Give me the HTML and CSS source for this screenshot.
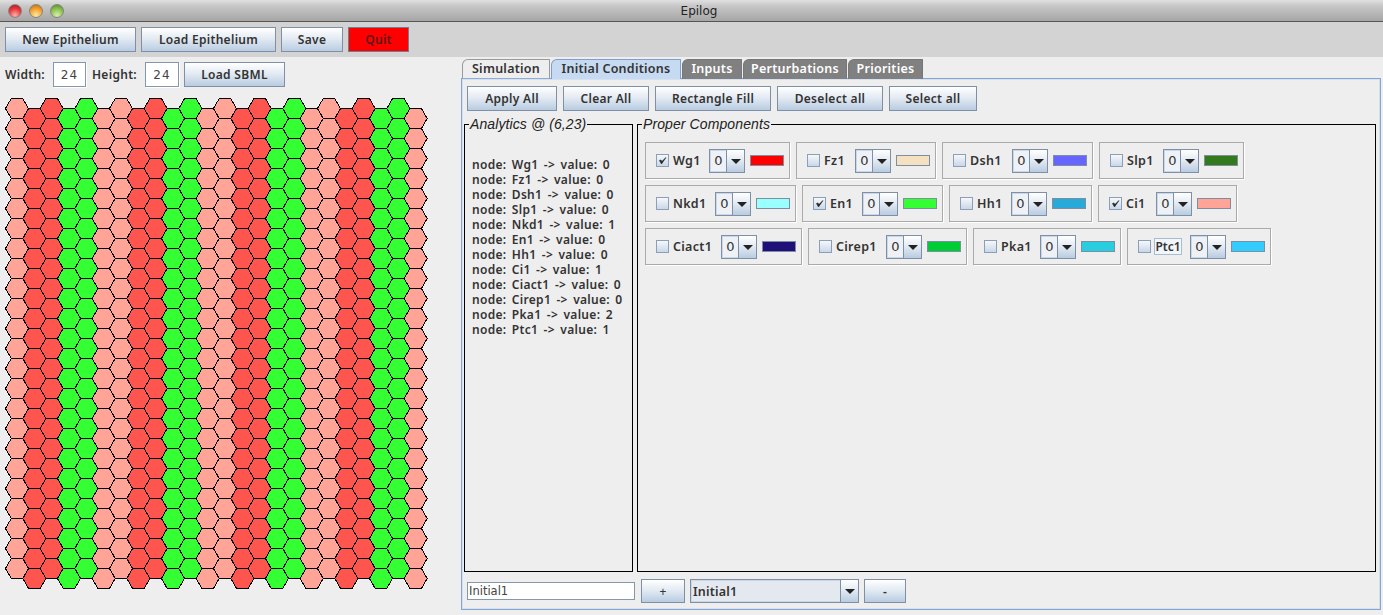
FILE: index.html
```html
<!DOCTYPE html>
<html lang="en">
<head>
<meta charset="utf-8">
<title>Epilog</title>
<link rel="stylesheet" href="styles.css">
</head>
<body>
<div class="window">
  <header class="titlebar">
    <div class="lights"><span class="light red"></span><span class="light amber"></span><span class="light green"></span></div>
    <div class="title">Epilog</div>
  </header>
  <nav class="toolbar">
    <button class="btn w-new">New Epithelium</button>
    <button class="btn w-load">Load Epithelium</button>
    <button class="btn w-save">Save</button>
    <button class="btn w-quit quit">Quit</button>
  </nav>
  <main class="main">
    <section class="left">
      <div class="dims">
        <label class="dim-label lw">Width:</label>
        <span class="dim-input iw">24</span>
        <label class="dim-label lh">Height:</label>
        <span class="dim-input ih">24</span>
        <button class="btn w-sbml">Load SBML</button>
      </div>
      <svg id="grid" class="grid" width="430" height="492" shape-rendering="crispEdges"></svg>
    </section>
    <section class="right">
      <div class="tabs">
        <div class="tab t-sim plain">Simulation</div>
        <div class="tab t-init active">Initial Conditions</div>
        <div class="tab t-inp">Inputs</div>
        <div class="tab t-per">Perturbations</div>
        <div class="tab t-pri">Priorities</div>
      </div>
      <div class="content">
        <div class="actions">
          <button class="btn w-apply">Apply All</button>
          <button class="btn w-clear">Clear All</button>
          <button class="btn w-rect">Rectangle Fill</button>
          <button class="btn w-desel">Deselect all</button>
          <button class="btn w-sel">Select all</button>
        </div>
        <div class="panels">
          <fieldset class="group analytics">
            <legend>Analytics @ (6,23)</legend>
            <div class="node">node: Wg1 -&gt; value: 0</div>
            <div class="node">node: Fz1 -&gt; value: 0</div>
            <div class="node">node: Dsh1 -&gt; value: 0</div>
            <div class="node">node: Slp1 -&gt; value: 0</div>
            <div class="node">node: Nkd1 -&gt; value: 1</div>
            <div class="node">node: En1 -&gt; value: 0</div>
            <div class="node">node: Hh1 -&gt; value: 0</div>
            <div class="node">node: Ci1 -&gt; value: 1</div>
            <div class="node">node: Ciact1 -&gt; value: 0</div>
            <div class="node">node: Cirep1 -&gt; value: 0</div>
            <div class="node">node: Pka1 -&gt; value: 2</div>
            <div class="node">node: Ptc1 -&gt; value: 1</div>
          </fieldset>
          <fieldset class="group proper">
            <legend>Proper Components</legend>
            <div class="comp-row">
              <div class="comp"><span class="check"><svg width="13" height="13" viewBox="0 0 13 13"><path class="tick" d="M3.5 6.5 L5.5 10 L10 3.5 L5.8 7.6 L5 6 Z"/></svg></span><span class="name l36">Wg1</span><span class="combo"><span class="val">0</span><span class="arrow"></span></span><span class="swatch c-wg"></span></div>
              <div class="comp"><span class="check"></span><span class="name l31">Fz1</span><span class="combo"><span class="val">0</span><span class="arrow"></span></span><span class="swatch c-fz"></span></div>
              <div class="comp"><span class="check"></span><span class="name l42">Dsh1</span><span class="combo"><span class="val">0</span><span class="arrow"></span></span><span class="swatch c-dsh"></span></div>
              <div class="comp"><span class="check"></span><span class="name l36">Slp1</span><span class="combo"><span class="val">0</span><span class="arrow"></span></span><span class="swatch c-slp"></span></div>
            </div>
            <div class="comp-row">
              <div class="comp"><span class="check"></span><span class="name l42">Nkd1</span><span class="combo"><span class="val">0</span><span class="arrow"></span></span><span class="swatch c-nkd"></span></div>
              <div class="comp"><span class="check"><svg width="13" height="13" viewBox="0 0 13 13"><path class="tick" d="M3.5 6.5 L5.5 10 L10 3.5 L5.8 7.6 L5 6 Z"/></svg></span><span class="name l32">En1</span><span class="combo"><span class="val">0</span><span class="arrow"></span></span><span class="swatch c-en"></span></div>
              <div class="comp"><span class="check"></span><span class="name l34">Hh1</span><span class="combo"><span class="val">0</span><span class="arrow"></span></span><span class="swatch c-hh"></span></div>
              <div class="comp"><span class="check"><svg width="13" height="13" viewBox="0 0 13 13"><path class="tick" d="M3.5 6.5 L5.5 10 L10 3.5 L5.8 7.6 L5 6 Z"/></svg></span><span class="name l30">Ci1</span><span class="combo"><span class="val">0</span><span class="arrow"></span></span><span class="swatch c-ci"></span></div>
            </div>
            <div class="comp-row">
              <div class="comp"><span class="check"></span><span class="name l48">Ciact1</span><span class="combo"><span class="val">0</span><span class="arrow"></span></span><span class="swatch c-ciact"></span></div>
              <div class="comp"><span class="check"></span><span class="name l50">Cirep1</span><span class="combo"><span class="val">0</span><span class="arrow"></span></span><span class="swatch c-cirep"></span></div>
              <div class="comp"><span class="check"></span><span class="name l39">Pka1</span><span class="combo"><span class="val">0</span><span class="arrow"></span></span><span class="swatch c-pka"></span></div>
              <div class="comp"><span class="check"></span><span class="name l35"><span class="focused">Ptc1</span></span><span class="combo"><span class="val">0</span><span class="arrow"></span></span><span class="swatch c-ptc"></span></div>
            </div>
          </fieldset>
        </div>
        <div class="bottom">
          <span class="text-field">Initial1</span>
          <button class="btn w-plus">+</button>
          <span class="combo wide"><span class="val">Initial1</span><span class="arrow"></span></span>
          <button class="btn w-minus">-</button>
        </div>
      </div>
    </section>
  </main>
</div>
<script src="hexes.js"></script>
</body>
</html>
```
FILE: styles.css
```css
* { box-sizing: border-box; }
html, body { margin: 0; padding: 0; }
body { width: 1383px; height: 615px; overflow: hidden; background: #eeeeee; color: #333; font-family: "Noto Sans", "DejaVu Sans", sans-serif; font-size: 12px; font-weight: 600; letter-spacing: 0.3px; }
.window { display: flex; flex-direction: column; height: 615px; }

.titlebar { position: relative; height: 22px; flex: none; padding-left: 15px; background: linear-gradient(#e0e0e0, #c6c6c6 30%, #a6a6a6); border-bottom: 1px solid #555; display: flex; align-items: center; justify-content: center; }
.title { font-family: "DejaVu Sans", sans-serif; font-weight: 400; font-size: 12px; letter-spacing: 0; color: #222; }
.lights { position: absolute; left: 8px; top: 4px; display: flex; gap: 7px; }
.light { width: 14px; height: 14px; border-radius: 50%; border: 1px solid #858585; }
.light.red { background: radial-gradient(circle at 50% 85%, #ffb0a8, #e8363c 55%, #a0141c); }
.light.amber { background: radial-gradient(circle at 50% 85%, #ffe9a0, #f4a030 55%, #b46812); }
.light.green { background: radial-gradient(circle at 50% 85%, #d8f0a8, #8cc050 55%, #4a8626); }

.toolbar { height: 35px; flex: none; background: #d3d3d3; display: flex; gap: 5px; padding: 5px 0 0 5px; }

.btn { display: block; height: 25px; padding: 0; font: inherit; letter-spacing: inherit; color: #333; border: 1px solid #7f90a6; border-radius: 0; background: linear-gradient(#ffffff, #e4ebf3 45%, #b9cce1); flex: none; }
.quit { background: #ff0000; color: #5e1a1a; border-color: #6f7f93; }
.w-new { width: 131px; } .w-load { width: 135px; } .w-save { width: 62px; } .w-quit { width: 61px; } .w-sbml { width: 101px; }
.w-apply { width: 90px; } .w-clear { width: 86px; } .w-rect { width: 116px; } .w-desel { width: 106px; } .w-sel { width: 88px; }
.w-plus { width: 44px; height: 24px; font-weight: 400; } .w-minus { width: 42px; height: 24px; }

.main { flex: 1; min-height: 0; display: flex; }
.left { width: 461px; flex: none; padding: 5px 0 0 5px; }
.dims { display: flex; align-items: center; height: 25px; }
.lw { width: 48px; }
.lh { width: 53px; margin-left: 6px; }
.dim-input { height: 25px; background: #fff; border: 1px solid #8497ad; box-shadow: 1px 1px 0 #fff; display: flex; align-items: center; justify-content: center; font-family: "DejaVu Sans", sans-serif; font-weight: 400; font-size: 12px; letter-spacing: 1px; color: #444; }
.iw { width: 33px; }
.ih { width: 34px; margin-right: 5px; }
.grid { display: block; margin: 11px 0 0 -5px; }

.right { flex: 1; min-width: 0; padding-top: 2px; display: flex; flex-direction: column; }
.tabs { display: flex; height: 19px; flex: none; padding-left: 1px; gap: 1px; position: relative; z-index: 1; }
.tab { height: 20px; padding-bottom: 2px; display: flex; align-items: center; justify-content: center; font-size: 12.5px; letter-spacing: 0.25px; background: #808080; color: #fff; border: 1px solid #777; border-bottom: 0; border-radius: 6px 1px 0 0; }
.tab.plain { background: #eeeeee; color: #333; border-color: #9a9a9a; border-bottom: 1px solid #8fadd2; }
.tab.active { background: #c6daf1; color: #333; border-color: #7f9fca; }
.t-sim { width: 88px; } .t-init { width: 130px; } .t-inp { width: 60px; } .t-per { width: 104px; } .t-pri { width: 75px; }

.content { flex: 1; min-height: 0; margin: 0 2px 5px 0; border: 1px solid #86a5cc; box-shadow: inset 0 0 0 1px #d4e1f2; padding: 7px 4px 6px 2px; display: flex; flex-direction: column; }
.actions { display: flex; gap: 6px; margin-left: 3px; flex: none; }
.panels { flex: 1; min-height: 0; display: flex; gap: 4px; margin-top: 5px; }
.group { margin: 0; padding: 0; min-width: 0; border: 1px solid #000; }
.group legend { margin-left: -3px; padding: 0 1px; font-family: "Liberation Sans", Arial, sans-serif; font-style: italic; font-weight: 400; font-size: 14px; letter-spacing: 0.1px; line-height: 16px; color: #222; }
.analytics { width: 169px; flex: none; padding: 25px 0 0 7px; }
.node { line-height: 15px; word-spacing: 2px; white-space: nowrap; }
.proper { flex: 1; padding: 10px 0 0 7px; }

.comp-row { display: flex; gap: 6px; margin-bottom: 6px; }
.comp { height: 37px; display: flex; align-items: center; padding: 0 5px 0 10px; border: 1px solid #aaaaaa; box-shadow: 1px 1px 0 #fff; }
.check { width: 13px; height: 13px; flex: none; margin-right: 4px; border: 1px solid #8c9fb6; background: linear-gradient(#f6f8fb, #c8d7e8); display: block; position: relative; }
.check svg { position: absolute; left: -1px; top: -1px; display: block; }
.tick { fill: #222; stroke: #222; stroke-width: 0.6; }
.name { flex: none; letter-spacing: 0.3px; white-space: nowrap; font-size: 12.5px; }
.l30 { width: 30px; } .l31 { width: 31px; } .l32 { width: 32px; } .l34 { width: 34px; } .l35 { width: 35px; } .l36 { width: 36px; } .l39 { width: 39px; } .l42 { width: 42px; } .l48 { width: 48px; } .l50 { width: 50px; }
.focused { display: inline-block; width: 28px; margin-left: -1px; line-height: 15px; font-size: 12px; letter-spacing: 0; text-align: center; border: 1px solid #a9bcd2; background: #f2f5f9; }
.combo { width: 36px; height: 24px; flex: none; margin-right: 5px; display: flex; border: 1px solid #7f90a6; }
.val { width: 16px; flex: none; display: flex; align-items: center; justify-content: center; border: 1px solid #c9d7e7; border-right: 0; background: #eef1f5; font-family: "DejaVu Sans", sans-serif; font-weight: 400; font-size: 13px; letter-spacing: 0; color: #333; }
.arrow { flex: 1; position: relative; border-left: 1px solid #7f90a6; background: linear-gradient(#fff, #e4ebf3 45%, #b9cce1); }
.arrow::after { content: ""; position: absolute; left: 50%; top: 50%; margin: -2px 0 0 -5px; border-left: 5px solid transparent; border-right: 5px solid transparent; border-top: 5px solid #222; }
.swatch { width: 34px; height: 11px; flex: none; border: 1px solid #7d8ea3; }
.c-wg { background: #ff0000; } .c-fz { background: #f5e0c0; } .c-dsh { background: #6666ff; } .c-slp { background: #337a1c; }
.c-nkd { background: #99ffff; } .c-en { background: #33ff33; } .c-hh { background: #27a9d9; } .c-ci { background: #ffa497; }
.c-ciact { background: #1f0f78; } .c-cirep { background: #00cc33; } .c-pka { background: #29cde0; } .c-ptc { background: #33ccff; }

.bottom { flex: none; margin-top: 7px; height: 24px; display: flex; align-items: center; margin-left: 3px; }
.text-field { width: 168px; height: 18px; margin-right: 6px; background: #fff; border: 1px solid #8497ad; display: flex; align-items: center; padding-left: 1px; font-family: "DejaVu Sans", sans-serif; font-weight: 400; font-size: 11.5px; letter-spacing: 0; color: #444; }
.w-plus { margin-right: 5px; }
.combo.wide { width: 169px; }
.combo.wide .val { width: 149px; justify-content: flex-start; padding-left: 1px; background: #e4e9ef; font-family: inherit; font-weight: 600; font-size: 12.5px; letter-spacing: 0.2px; }
```
FILE: hexes.js
```js
var svg = document.getElementById('grid');
var NS = 'http://www.w3.org/2000/svg';
var palette = ['#ffa497', '#ff554f', '#ff554f', '#33ff33', '#33ff33', '#ffa497'];
var r = 11.5, h = 10, step = 17.333;
for (var col = 0; col < 24; col++) {
  for (var row = 0; row < 24; row++) {
    var cx = 17 + col * step;
    var cy = 10.5 + row * 20 + (col % 2 ? 10 : 0);
    var p = document.createElementNS(NS, 'polygon');
    p.setAttribute('points', [
      [cx - r, cy], [cx - r / 2, cy - h], [cx + r / 2, cy - h],
      [cx + r, cy], [cx + r / 2, cy + h], [cx - r / 2, cy + h]
    ].map(function (q) { return q.join(','); }).join(' '));
    p.setAttribute('fill', palette[col % 6]);
    p.setAttribute('stroke', '#000');
    svg.appendChild(p);
  }
}
```
